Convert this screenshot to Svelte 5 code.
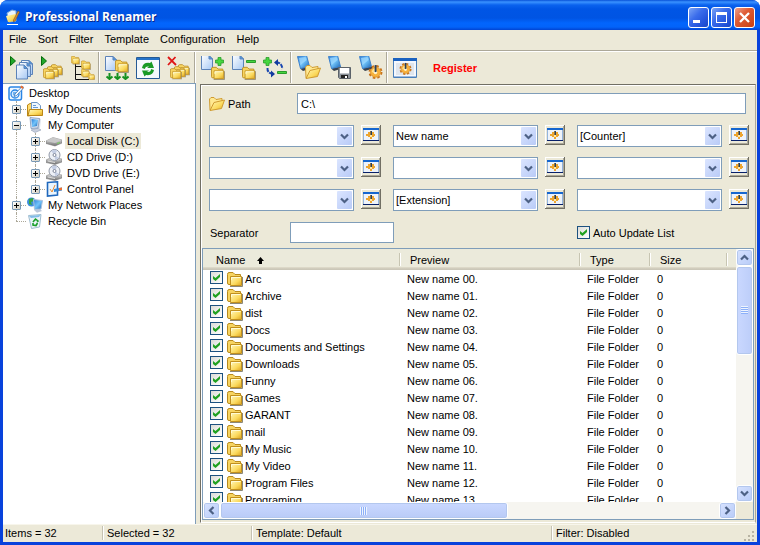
<script lang="ts">
  type TreeNode = {
    name: string;
    icon: string;
    guides: string[];
    expander?: string;
    selected?: boolean;
  };

  const menus = ['File', 'Sort', 'Filter', 'Template', 'Configuration', 'Help'];

  const toolGroups = [
    [
      { icon: 'add-files', label: 'Add files' },
      { icon: 'add-folders', label: 'Add folders' },
      { icon: 'add-tree', label: 'Add folder tree' }
    ],
    [
      { icon: 'rename', label: 'Rename' },
      { icon: 'refresh', label: 'Refresh' },
      { icon: 'clear', label: 'Clear list' }
    ],
    [
      { icon: 'check-all', label: 'Select all' },
      { icon: 'uncheck-all', label: 'Deselect all' },
      { icon: 'invert', label: 'Invert selection' }
    ],
    [
      { icon: 'load', label: 'Load template' },
      { icon: 'save', label: 'Save template' },
      { icon: 'setup', label: 'Template settings' }
    ],
    [{ icon: 'options', label: 'Options' }]
  ];

  const tree: TreeNode[] = [
    { name: 'Desktop', icon: 'desktop', guides: [] },
    { name: 'My Documents', icon: 'documents', guides: ['tee'], expander: '+' },
    { name: 'My Computer', icon: 'computer', guides: ['tee'], expander: '-' },
    { name: 'Local Disk (C:)', icon: 'disk', guides: ['line', 'tee'], expander: '+', selected: true },
    { name: 'CD Drive (D:)', icon: 'cd', guides: ['line', 'tee'], expander: '+' },
    { name: 'DVD Drive (E:)', icon: 'cd', guides: ['line', 'tee'], expander: '+' },
    { name: 'Control Panel', icon: 'control', guides: ['line', 'end'], expander: '+' },
    { name: 'My Network Places', icon: 'network', guides: ['tee'], expander: '+' },
    { name: 'Recycle Bin', icon: 'bin', guides: ['end'] }
  ];

  const parts = ['', 'New name', '[Counter]', '', '', '', '', '[Extension]', ''];

  const folders = [
    'Arc', 'Archive', 'dist', 'Docs', 'Documents and Settings', 'Downloads', 'Funny',
    'Games', 'GARANT', 'mail', 'My Music', 'My Video', 'Program Files', 'Programing'
  ];

  let files = $state(
    folders.map((name, i) => ({
      name,
      preview: `New name ${String(i).padStart(2, '0')}.`,
      type: 'File Folder',
      size: 0,
      checked: true
    }))
  );

  let path = $state('C:\\');
  let separator = $state('');
  let autoUpdate = $state(true);
</script>

{#snippet icon(name: string, size: number)}
  <svg width={size} height={size} aria-hidden="true"><use href="#{name}" /></svg>
{/snippet}

{#snippet chevron(turn: number)}
  <svg class="chevron" width="9" height="9" viewBox="0 0 9 9" aria-hidden="true">
    <path d="M1 2.500L4.500 6L8 2.500" transform="rotate({turn} 4.500 4.500)" />
  </svg>
{/snippet}

<svg class="sprites" width="0" height="0" aria-hidden="true">
  <defs>
    <linearGradient id="gold" x1="0" y1="0" x2="1" y2="1">
      <stop offset="0" stop-color="#fff9c0" />
      <stop offset="0.6" stop-color="#fbd95c" />
      <stop offset="1" stop-color="#dca421" />
    </linearGradient>
    <linearGradient id="paper" x1="0" y1="0" x2="1" y2="1">
      <stop offset="0" stop-color="#ffffff" />
      <stop offset="1" stop-color="#a5c8f4" />
    </linearGradient>
    <linearGradient id="screen" x1="0" y1="0" x2="1" y2="1">
      <stop offset="0" stop-color="#2f7fd8" />
      <stop offset="0.5" stop-color="#73c4fa" />
      <stop offset="1" stop-color="#1763b5" />
    </linearGradient>
    <linearGradient id="metal" x1="0" y1="0" x2="0" y2="1">
      <stop offset="0" stop-color="#f2f2f2" />
      <stop offset="1" stop-color="#6f6f6f" />
    </linearGradient>
  </defs>

  <symbol id="folder" viewBox="0 0 16 16">
    <path d="M3 15.500H15.500V6" fill="none" stroke="#8b8778" />
    <path d="M.5 3.500Q.5 1.500 2 1.500H6L8 3.500H13.500V13.500H2Q.5 13.500 .5 12Z" fill="#f7d461" stroke="#b98a1c" />
    <path d="M3.500 5.500H14.500V14.500H3.500Z" fill="url(#gold)" stroke="#c1901d" />
    <path d="M4.500 9V6.500H13.500" fill="none" stroke="#fffbd4" />
  </symbol>
  <symbol id="open-folder" viewBox="0 0 16 16">
    <path d="M1 14L.5 3L2 1.500H5L7 3.500L13 2.500V6Z" fill="#ffe991" stroke="#cf9b31" />
    <path d="M1 14.500L5 6.500L15.500 4L12.500 12.500Z" fill="url(#gold)" stroke="#cf9b31" />
  </symbol>
  <symbol id="page" viewBox="0 0 12 15">
    <path d="M.5 .5H8L11.500 4V14.500H.5Z" fill="url(#paper)" stroke="#5c83b8" />
    <path d="M8 .5V4H11.500Z" fill="#4b9be9" stroke="#5c83b8" />
  </symbol>
  <symbol id="monitor" viewBox="0 0 14 16">
    <path d="M3 13.500L12.500 11L14 13.500L6 16Z" fill="#39434f" />
    <path d="M.5 1.500L9.500 .5L12.500 11.500L3.500 13.500Z" fill="url(#screen)" stroke="#3f82cc" />
    <path d="M2 3L8.500 2L9.500 5L3.500 10Z" fill="#a4dcff" opacity="0.7" />
  </symbol>
  <symbol id="gear" viewBox="0 0 14 14">
    <circle cx="7" cy="7.500" r="5.600" fill="none" stroke="#c9741a" stroke-width="1.800" stroke-dasharray="2.400 2" />
    <circle cx="7" cy="7.500" r="4.800" fill="#f6b13c" stroke="#d98a22" stroke-width="0.600" />
    <path d="M3.500 7.500Q4 4 7 4V9Z" fill="#ffdf8c" />
    <circle cx="7" cy="8" r="1.600" fill="#fff3cf" />
    <path d="M6.200 1H7.900V7.500H6.200Z" fill="#26405f" />
  </symbol>
  <symbol id="plus" viewBox="0 0 9 9">
    <path d="M3 .5H6V3H8.500V6H6V8.500H3V6H.5V3H3Z" fill="#46d63f" stroke="#2a9c2c" stroke-width="0.800" />
  </symbol>
  <symbol id="play" viewBox="0 0 6 10">
    <path d="M.5 .5L5.500 5L.5 9.500Z" fill="#22a82a" stroke="#066b0b" />
  </symbol>
  <symbol id="folder-stack" viewBox="0 0 21 16">
    <use href="#folder" x="8" y="0" width="12" height="12" />
    <use href="#folder" x="4" y="2" width="12" height="12" />
    <use href="#folder" x="0" y="4" width="12" height="12" />
  </symbol>
  <symbol id="gear-window" viewBox="0 0 24 20">
    <path d="M.5 .5H23.500V19.500H.5Z" fill="#f4f8fd" stroke="#4a80ba" />
    <path d="M0 0H24V3H0Z" fill="#1a62c0" />
    <path d="M3 5H21V17H3Z" fill="#dfe6ee" />
    <path d="M1 18H23V19H1Z" fill="#9dbbe0" />
    <use href="#gear" x="6" y="4" width="13" height="13" />
  </symbol>

  <symbol id="add-files" viewBox="0 0 24 24">
    <use href="#play" x="1" y="0" width="6" height="10" />
    <use href="#page" x="12" y="4" width="12" height="15" />
    <use href="#page" x="10" y="6" width="12" height="15" />
    <use href="#page" x="7" y="8" width="12" height="16" />
  </symbol>
  <symbol id="add-folders" viewBox="0 0 24 24">
    <use href="#play" x="1" y="0" width="6" height="10" />
    <use href="#folder-stack" x="3" y="7" width="21" height="17" />
  </symbol>
  <symbol id="add-tree" viewBox="0 0 24 24">
    <path d="M4.500 7V23.500M4.500 10.500H11M4.500 18.500H11M4.500 23.500H18" fill="none" stroke="#111" />
    <use href="#folder" x="0" y="-1" width="9" height="10" />
    <use href="#folder" x="10" y="4" width="10" height="10" />
    <use href="#folder" x="10" y="12" width="9" height="10" />
    <use href="#folder" x="17" y="17" width="7" height="7" />
  </symbol>
  <symbol id="rename" viewBox="0 0 24 24">
    <use href="#page" x="0" y="0" width="12" height="15" />
    <use href="#folder" x="10" y="3" width="14" height="14" />
    <path
      d="M4.500 17V23M12.500 17V23M20.500 17V23M1.500 20.500L4.500 23L7.500 20.500M9.500 20.500L12.500 23L15.500 20.500M17.500 20.500L20.500 23L23.500 20.500"
      fill="none"
      stroke="#159121"
      stroke-width="2"
    />
  </symbol>
  <symbol id="refresh" viewBox="0 0 24 24">
    <path d="M.5 1.500H23.500V22.500H.5Z" fill="#f5f9fc" stroke="#265a94" />
    <path d="M1 2H23V4H1Z" fill="#2573c9" />
    <path d="M6 12Q7 6 14 7L15.500 5.500L18 12H11L13 10.500Q9 10 9 13Z" fill="#199a25" />
    <path d="M18 14Q17 20 10 19L8.500 20.500L6 14.500H13L11 16Q15 16.500 15 13Z" fill="#199a25" />
  </symbol>
  <symbol id="clear" viewBox="0 0 24 24">
    <use href="#folder-stack" x="3" y="7" width="21" height="17" />
    <path d="M1 1L9 9M8.500 1L1 9" stroke="#df1515" stroke-width="1.800" />
  </symbol>
  <symbol id="check-all" viewBox="0 0 24 24">
    <use href="#page" x="0" y="-1" width="12" height="15" />
    <use href="#plus" x="14" y="1" width="9" height="9" />
    <use href="#folder" x="10" y="10" width="14" height="14" />
  </symbol>
  <symbol id="uncheck-all" viewBox="0 0 24 24">
    <use href="#page" x="0" y="-1" width="12" height="15" />
    <path d="M14.500 4.500H23.500V6.500H14.500Z" fill="#46d63f" stroke="#2a9c2c" />
    <use href="#folder" x="10" y="10" width="14" height="14" />
  </symbol>
  <symbol id="invert" viewBox="0 0 24 24">
    <use href="#plus" x="0" y="1" width="9" height="9" />
    <path d="M14.500 15.500H23.500V17.500H14.500Z" fill="#46d63f" stroke="#2a9c2c" />
    <path d="M13 6.500Q18.500 6 19.500 13M4.500 12Q4 17 10 18" fill="none" stroke="#1745b0" stroke-width="2" stroke-dasharray="4 1" />
    <path d="M15 3L11 6.500L15 10ZM8 14.500L12 18L8 21.500Z" fill="#123a9e" />
  </symbol>
  <symbol id="load" viewBox="0 0 24 24">
    <use href="#monitor" x="0" y="-1" width="14" height="16" />
    <use href="#open-folder" x="8" y="8" width="16" height="16" />
  </symbol>
  <symbol id="save" viewBox="0 0 24 24">
    <use href="#monitor" x="0" y="-1" width="14" height="16" />
    <path d="M10.500 11.500H22.500V22.500H11.500L10.500 21.500Z" fill="#8b9299" stroke="#5b6269" />
    <path d="M12 12H21V17.500H12Z" fill="#fff" />
    <path d="M13 19H20V22H13Z" fill="#222" />
    <path d="M17 20H19V22H17Z" fill="#fff" />
  </symbol>
  <symbol id="setup" viewBox="0 0 24 24">
    <use href="#monitor" x="0" y="-1" width="14" height="16" />
    <use href="#gear" x="9" y="8" width="15" height="15" />
  </symbol>
  <symbol id="options" viewBox="0 0 24 24">
    <use href="#gear-window" x="0" y="2" width="24" height="20" />
  </symbol>
  <symbol id="part-settings" viewBox="0 0 16 16">
    <path d="M0 2H16V14H0Z" fill="#eef3fa" />
    <path d="M0 1H16V3H0Z" fill="#1566cf" />
    <path d="M0 3H1V13H0ZM15 3H16V13H15Z" fill="#93b4de" />
    <path d="M0 13H16V14H0Z" fill="#071f68" />
    <path d="M5 5H7V4H9V5H11V7H12V9H11V10H9V12H7V10H5V9H3V7H5Z" fill="#eda52f" />
    <path d="M7 8H9V10H7Z" fill="#ffe9ab" />
    <path d="M7.500 4H9V8H7.500Z" fill="#26405f" />
  </symbol>

  <symbol id="app-logo" viewBox="0 0 16 16">
    <path d="M2 4L7 1L11 2V12L4 13Z" fill="#e7f3ff" stroke="#79a9df" />
    <path d="M1 7L11 5V12L3 13Z" fill="url(#gold)" />
    <path d="M13 2L14.500 3L10 12L8.500 13V11Z" fill="#d58f35" stroke="#744719" stroke-width="0.500" />
    <path d="M2 15.500H13" stroke="#fff" />
  </symbol>
  <symbol id="desktop" viewBox="0 0 16 16">
    <rect x="1" y="2" width="12.500" height="13" rx="2" fill="#eef7ff" stroke="#2a86e6" stroke-width="1.500" />
    <circle cx="7" cy="9" r="4" fill="#d6ebff" stroke="#2a86e6" stroke-width="1.300" />
    <path d="M5 7L9 7L8 11L5 10Z" fill="#6fb2f0" />
    <path d="M14.500 1L7 9L6 11.500L8.500 10.500L15.500 3Z" fill="#fff" stroke="#3375bb" stroke-width="0.800" />
    <path d="M13.500 .5L15.800 2.500L14.500 4L12 2Z" fill="#eb7132" />
  </symbol>
  <symbol id="documents" viewBox="0 0 16 16">
    <path d="M.5 15V4L3 2.500H5V14.500Z" fill="#ffdb6e" stroke="#bb8717" />
    <path d="M4.500 1.500H10L13.500 4.500V12H4.500Z" fill="#eef7ff" stroke="#6c94c2" />
    <path d="M6 4.500H9M6 6.500H11" stroke="#6799d3" />
    <path d="M2.500 8.500H15.500V14.500H1Z" fill="url(#gold)" stroke="#bb8717" />
  </symbol>
  <symbol id="computer" viewBox="0 0 16 16">
    <path d="M4 13L11 11L14 13L8 15.500Z" fill="#c6cede" stroke="#8492aa" stroke-width="0.500" />
    <path d="M12 1L14 2L13 11L11 11Z" fill="#dbe2ed" />
    <path d="M3 .5L12.500 1.500L11 11L4 11.500Z" fill="#d4dfef" stroke="#7d94b5" stroke-width="0.800" />
    <path d="M4.500 2L11 2.800L10 9L5 10Z" fill="url(#screen)" />
  </symbol>
  <symbol id="disk" viewBox="0 0 16 16">
    <path d="M0 8L7 4.500L16 7V10L9 13L0 10.500Z" fill="url(#metal)" stroke="#6b6b6b" stroke-width="0.500" />
    <path d="M0 8L7 4.500L16 7L9 10Z" fill="#c9c9c9" />
    <path d="M11 10.500L14 9.500" stroke="#73d55b" />
  </symbol>
  <symbol id="cd" viewBox="0 0 16 16">
    <path d="M0 11L6 8L16 10V13L9 15.500L0 13.500Z" fill="url(#metal)" stroke="#777" stroke-width="0.500" />
    <circle cx="8.500" cy="6" r="5.500" fill="#edf0f6" stroke="#9299a8" />
    <path d="M8.500 6L5 2Q9 0 11 2ZM8.500 6L13 9L9 11Z" fill="#c4cee4" />
    <circle cx="8.500" cy="6" r="1.500" fill="#fff" stroke="#7f879a" />
    <path d="M2 12L9 13.500" stroke="#ddd" />
  </symbol>
  <symbol id="control" viewBox="0 0 16 16">
    <path d="M1.500 1.500L11.500 .8V14L1.500 15Z" fill="#e9f5ff" stroke="#2068bd" stroke-width="1.600" />
    <path d="M4 8L6 11L9 4" fill="none" stroke="#ef8c2e" />
    <path d="M8 8L16 6.500V9.500L8 11Z" fill="#3387d8" />
    <path d="M13 7L16 6.500V9L13 9.500Z" fill="#eb7132" />
  </symbol>
  <symbol id="network" viewBox="0 0 16 16">
    <circle cx="4.500" cy="5" r="4.500" fill="#3d8fdd" />
    <path d="M2 2L6 1L7 4L4 5L5 8L2 7Z" fill="#37a643" />
    <path d="M7 13L13 12L15 14L10 15.800Z" fill="#bac6d9" />
    <path d="M6.500 2.500L15.500 3.500L14 12L7.500 12.500Z" fill="url(#screen)" stroke="#adc2de" />
  </symbol>
  <symbol id="bin" viewBox="0 0 16 16">
    <path d="M1.500 2.500L14 1.500L12.500 14L4.500 15.500Z" fill="#e9f4f8" stroke="#a0bdd0" />
    <path d="M2 3L13.500 2L12 4L4 5Z" fill="#81bce8" />
    <path d="M6 9L8.500 6L11 8L10 9M10.500 10L9 12.500L6 12V10" fill="none" stroke="#1b9e2c" stroke-width="1.600" />
  </symbol>
</svg>

<div class="window">
  <header class="titlebar">
    {@render icon('app-logo', 16)}
    <h1>Professional Renamer</h1>
    <button class="caption" aria-label="Minimize">
      <svg width="19" height="19"><path d="M4 12H11V15H4Z" fill="#fff" /></svg>
    </button>
    <button class="caption" aria-label="Maximize">
      <svg width="19" height="19"><path d="M4 4H15V15H4ZM5 7V14H14V7Z" fill="#fff" fill-rule="evenodd" /></svg>
    </button>
    <button class="caption close" aria-label="Close">
      <svg width="19" height="19"><path d="M5 5L14 14M14 5L5 14" stroke="#fff" stroke-width="2.300" /></svg>
    </button>
  </header>

  <nav class="menubar">
    {#each menus as menu}
      <button>{menu}</button>
    {/each}
  </nav>

  <div class="toolbar">
    {#each toolGroups as group}
      <div class="tool-group">
        {#each group as tool}
          <button aria-label={tool.label}>{@render icon(tool.icon, 24)}</button>
        {/each}
      </div>
    {/each}
    <a class="register" href="#register">Register</a>
  </div>

  <main>
    <ul class="tree">
      {#each tree as node}
        <li>
          {#each node.guides as guide, i}
            <span class="guide {guide}">
              {#if node.expander && i === node.guides.length - 1}
                <button class="expander" aria-label="Toggle {node.name}">
                  <svg width="7" height="7">
                    <path d={node.expander === '+' ? 'M1 3.500H6M3.500 1V6' : 'M1 3.500H6'} />
                  </svg>
                </button>
              {/if}
            </span>
          {/each}
          {@render icon(node.icon, 16)}
          <span class="node-name" class:selected={node.selected}>{node.name}</span>
        </li>
      {/each}
    </ul>

    <section class="panel">
      <form class="form">
        <div class="path-row">
          <label for="path">{@render icon('open-folder', 16)}Path</label>
          <input id="path" type="text" bind:value={path} />
        </div>

        <div class="parts">
          {#each parts as part, i}
            <div class="part">
              <div class="combo">
                <select aria-label="Name part {i + 1}">
                  <option>{part}</option>
                </select>
                <span class="drop">{@render chevron(0)}</span>
              </div>
              <button type="button" class="part-button" aria-label="Settings of part {i + 1}">
                {@render icon('part-settings', 16)}
              </button>
            </div>
          {/each}
        </div>

        <div class="options-row">
          <div class="separator">
            <label for="separator">Separator</label>
            <input id="separator" type="text" bind:value={separator} />
          </div>
          <label class="auto-update">
            <input type="checkbox" bind:checked={autoUpdate} />
            Auto Update List
          </label>
        </div>
      </form>

      <div class="list">
        <div class="viewport">
          <table>
            <colgroup>
              <col class="col-name" />
              <col class="col-preview" />
              <col class="col-type" />
              <col class="col-size" />
              <col />
            </colgroup>
            <thead>
              <tr>
                <th>
                  Name
                  <svg class="sort" width="7" height="7"><path d="M3.500 0L7 4H5V7H2V4H0Z" /></svg>
                </th>
                <th>Preview</th>
                <th>Type</th>
                <th>Size</th>
                <th></th>
              </tr>
            </thead>
            <tbody>
              {#each files as file}
                <tr>
                  <td>
                    <label class="file">
                      <input type="checkbox" bind:checked={file.checked} />
                      {@render icon('folder', 16)}
                      <span>{file.name}</span>
                    </label>
                  </td>
                  <td>{file.preview}</td>
                  <td>{file.type}</td>
                  <td>{file.size}</td>
                  <td></td>
                </tr>
              {/each}
            </tbody>
          </table>
        </div>
        <div class="scroll vertical">
          <button aria-label="Scroll up">{@render chevron(180)}</button>
          <div class="thumb"><span class="grip"></span></div>
          <button class="last" aria-label="Scroll down">{@render chevron(0)}</button>
        </div>
        <div class="scroll horizontal">
          <button aria-label="Scroll left">{@render chevron(90)}</button>
          <div class="thumb"><span class="grip"></span></div>
          <button class="last" aria-label="Scroll right">{@render chevron(270)}</button>
        </div>
      </div>
    </section>
  </main>

  <footer class="statusbar">
    <span>Items = 32</span>
    <span>Selected = 32</span>
    <span>Template: Default</span>
    <span>Filter: Disabled</span>
    <svg class="size-grip" width="12" height="12" aria-hidden="true">
      <path d="M9 1H11V3H9ZM9 5H11V7H9ZM9 9H11V11H9ZM5 5H7V7H5ZM5 9H7V11H5ZM1 9H3V11H1Z" />
    </svg>
  </footer>
</div>

<style>
  :global(body) {
    margin: 0;
    background: #fff;
  }

  .window {
    display: flex;
    flex-direction: column;
    box-sizing: border-box;
    height: 100vh;
    overflow: hidden;
    padding: 0 3px 3px;
    border-radius: 8px 8px 0 0;
    background: #0842dc;
    color: #000;
    font: 11px/16px 'Liberation Sans', Arial, sans-serif;
  }

  .sprites {
    position: absolute;
  }

  svg {
    display: block;
    flex: none;
  }

  button {
    display: flex;
    align-items: center;
    justify-content: center;
    padding: 0;
    border: 0;
    background: none;
    color: inherit;
    font: inherit;
  }

  input,
  select {
    box-sizing: border-box;
    margin: 0;
    border: 1px solid #7f9db9;
    border-radius: 0;
    background: #fff;
    color: #000;
    font: inherit;
  }

  .titlebar {
    display: flex;
    align-items: center;
    gap: 2px;
    box-sizing: border-box;
    height: 30px;
    margin: 0 -3px;
    padding: 4px 5px 0 5px;
    background: linear-gradient(#0851d8, #3a92ff 2px, #0a62ee 5px, #0055e5 9px, #0054e3 18px, #0265fd 23px, #0263fa 27px, #0144d2);
  }

  .titlebar h1 {
    flex: 1;
    margin: 0 0 0 2px;
    color: #fff;
    font: bold 12px/18px 'Open Sans', 'Trebuchet MS', sans-serif;
    text-shadow: 1px 1px #0a2a8c;
  }

  .caption {
    width: 21px;
    height: 21px;
    border: 1px solid #fff;
    border-radius: 3px;
    background: linear-gradient(135deg, #7ba4f5, #3a6ceb 40%, #2050d8 80%, #1b48c0);
  }

  .caption.close {
    background: linear-gradient(135deg, #eca08c, #df5c35 40%, #c93f12);
  }

  .menubar {
    display: flex;
    gap: 1px;
    box-sizing: border-box;
    height: 21px;
    padding-left: 1px;
    border-bottom: 1px solid #aca899;
    background: #ece9d8;
  }

  .menubar button {
    height: 18px;
    padding: 0 5px;
  }

  .toolbar {
    display: flex;
    align-items: center;
    box-sizing: border-box;
    height: 32px;
    padding-left: 2px;
    border-top: 1px solid #fff;
    background: #ece9d8;
  }

  .tool-group {
    display: flex;
    margin-right: 1px;
    border-right: 1px solid #aca899;
    box-shadow: 1px 0 #fff;
  }

  .tool-group + .tool-group {
    padding-left: 1px;
  }

  .tool-group:last-of-type {
    border-right: 0;
    box-shadow: none;
  }

  .tool-group button {
    width: 31px;
    height: 31px;
  }

  .register {
    margin-left: 12px;
    color: #f00;
    font-weight: bold;
    text-decoration: none;
  }

  main {
    display: grid;
    grid-template-columns: 193px minmax(0, 1fr);
    flex: 1;
    gap: 4px;
    min-height: 0;
    background: #ece9d8;
  }

  .tree {
    box-sizing: border-box;
    margin: 0;
    padding: 1px 0 0 4px;
    overflow: hidden;
    border: solid #7f9db9;
    border-width: 1px 1px 0 0;
    background: #fff;
    list-style: none;
  }

  .tree li {
    display: flex;
    align-items: center;
    height: 16px;
  }

  .tree li > :global(svg) {
    margin: 0 3px 0 1px;
  }

  .guide {
    display: grid;
    place-items: center;
    position: relative;
    width: 19px;
    height: 16px;
  }

  .guide::before {
    content: '';
    position: absolute;
    inset: 0 auto 0 9px;
    border-left: 1px dotted #aca899;
  }

  .guide.end::before {
    bottom: 8px;
  }

  .guide.tee::after,
  .guide.end::after {
    content: '';
    position: absolute;
    inset: 8px 0 auto 9px;
    border-top: 1px dotted #aca899;
  }

  .expander {
    z-index: 1;
    box-sizing: border-box;
    width: 9px;
    height: 9px;
    border: 1px solid #7898b5;
    border-radius: 1px;
    background: linear-gradient(135deg, #fff, #d2cec0);
  }

  .expander svg {
    stroke: #000;
  }

  .node-name {
    padding: 0 2px;
    white-space: nowrap;
  }

  .node-name.selected {
    background: #ece9d8;
  }

  .panel {
    display: flex;
    flex-direction: column;
    box-sizing: border-box;
    min-height: 0;
    margin: 1px 1px 1px 0;
    border: 1px solid #716f64;
    border-right-color: #aca899;
    border-bottom-color: #fff;
    box-shadow: inset 1px 1px #fff;
  }

  .form {
    display: flex;
    flex-direction: column;
    gap: 11px;
    padding: 8px 6px 5px 8px;
  }

  .path-row {
    display: flex;
    padding-right: 3px;
  }

  .path-row label {
    display: flex;
    align-items: center;
    gap: 3px;
    width: 88px;
  }

  .path-row input {
    flex: 1;
    min-width: 0;
    height: 21px;
    padding: 0 3px;
  }

  .parts {
    display: grid;
    grid-template-columns: repeat(3, minmax(0, 1fr));
    gap: 10px 12px;
  }

  .part {
    display: flex;
    gap: 7px;
  }

  .combo {
    position: relative;
    flex: 1;
    min-width: 0;
  }

  .combo select {
    display: block;
    width: 100%;
    height: 22px;
    padding: 0 20px 0 2px;
    appearance: none;
  }

  .drop {
    display: grid;
    place-items: center;
    position: absolute;
    inset: 2px 2px 2px auto;
    width: 15px;
    border-radius: 1px;
    background: linear-gradient(135deg, #dbe5ff, #b9cbf7);
    pointer-events: none;
  }

  .chevron {
    fill: none;
    stroke: #4d6185;
    stroke-width: 2.2;
  }

  .part-button {
    box-sizing: border-box;
    width: 20px;
    height: 20px;
    border: solid #716f64;
    border-width: 0 1px 1px 0;
    box-shadow: inset 1px 1px #fff, inset -1px -1px #aca899;
  }

  .options-row {
    display: grid;
    grid-template-columns: repeat(3, minmax(0, 1fr));
    column-gap: 12px;
  }

  .separator {
    display: flex;
    align-items: center;
    grid-column: span 2;
    padding-left: 1px;
  }

  .separator label {
    width: 80px;
  }

  .separator input {
    width: 104px;
    height: 21px;
  }

  .auto-update {
    display: flex;
    align-items: center;
    gap: 3px;
  }

  input[type='checkbox'] {
    display: grid;
    flex: none;
    place-items: center;
    width: 13px;
    height: 13px;
    border-color: #1c5180;
    background: linear-gradient(135deg, #dcdcd7, #fff);
    appearance: none;
  }

  input[type='checkbox']:checked::before {
    content: '';
    width: 7px;
    height: 7px;
    background: #21a121;
    clip-path: polygon(0 28%, 36% 58%, 100% 0, 100% 42%, 36% 100%, 0 72%);
  }

  .list {
    display: grid;
    grid-template-columns: minmax(0, 1fr) 17px;
    grid-template-rows: minmax(0, 1fr) 17px;
    flex: 1;
    min-height: 0;
    margin: 0 1px 2px;
    border: 1px solid #7f9db9;
  }

  .viewport {
    overflow: hidden;
    background: #fff;
  }

  table {
    width: 100%;
    border-spacing: 0;
    table-layout: fixed;
  }

  .col-name {
    width: 198px;
  }

  .col-preview {
    width: 180px;
  }

  .col-type {
    width: 70px;
  }

  .col-size {
    width: 77px;
  }

  th {
    height: 21px;
    padding: 0 0 0 9px;
    background:
      linear-gradient(#c7c5b2, #c7c5b2) right 1px top 4px / 1px 13px no-repeat,
      linear-gradient(#fff, #fff) right 0 top 4px / 1px 13px no-repeat,
      linear-gradient(#ebeadb 18px, #e2decd 18px, #d6d2c2 19px, #cbc7b8 20px);
    font-weight: normal;
    text-align: left;
  }

  th:first-child {
    padding-left: 13px;
  }

  th:last-child {
    background: linear-gradient(#ebeadb 18px, #e2decd 18px, #d6d2c2 19px, #cbc7b8 20px);
  }

  .sort {
    display: inline-block;
    margin-left: 9px;
  }

  td {
    height: 16px;
    padding: 1px 0 0 6px;
    line-height: 16px;
    white-space: nowrap;
  }

  .file {
    display: flex;
    align-items: center;
    height: 16px;
  }

  .file input {
    margin: 0 4px 3px 1px;
  }

  .file span {
    margin-left: 2px;
  }

  .scroll {
    display: flex;
    background: #f6f5f0;
  }

  .vertical {
    flex-direction: column;
  }

  .horizontal {
    box-shadow: 17px 0 #ece9d8;
  }

  .scroll button,
  .thumb {
    box-sizing: border-box;
    width: 17px;
    height: 17px;
    border: 1px solid #fff;
    border-radius: 3px;
    background: linear-gradient(135deg, #d8e3ff, #b7cbf8);
    box-shadow: inset 0 0 0 1px #b3c7ee;
  }

  .thumb {
    display: grid;
    place-items: center;
  }

  .scroll .last {
    margin-top: auto;
  }

  .horizontal .last {
    margin: 0 0 0 auto;
  }

  .vertical .thumb {
    height: 35%;
    background: linear-gradient(90deg, #cad8ff, #bccdf9);
  }

  .horizontal .thumb {
    width: 54%;
    background: linear-gradient(#cad8ff, #b9cbf7);
  }

  .grip {
    width: 7px;
    height: 8px;
    background: repeating-linear-gradient(#eef4fe 0 1px, #8cb0f8 1px 2px);
  }

  .horizontal .grip {
    background: repeating-linear-gradient(90deg, #eef4fe 0 1px, #8cb0f8 1px 2px);
  }

  .statusbar {
    display: grid;
    grid-template-columns: 97px 149px 300px 1fr 14px;
    align-items: center;
    height: 18px;
    padding-left: 2px;
    background: #ece9d8;
    box-shadow: inset 0 1px #f8f6ec;
  }

  .statusbar span + span {
    padding-left: 4px;
    border-left: 1px solid #c5c2b2;
    line-height: 14px;
    box-shadow: inset 1px 0 #fff;
  }

  .size-grip {
    align-self: end;
    fill: #b8b4a3;
  }
</style>
